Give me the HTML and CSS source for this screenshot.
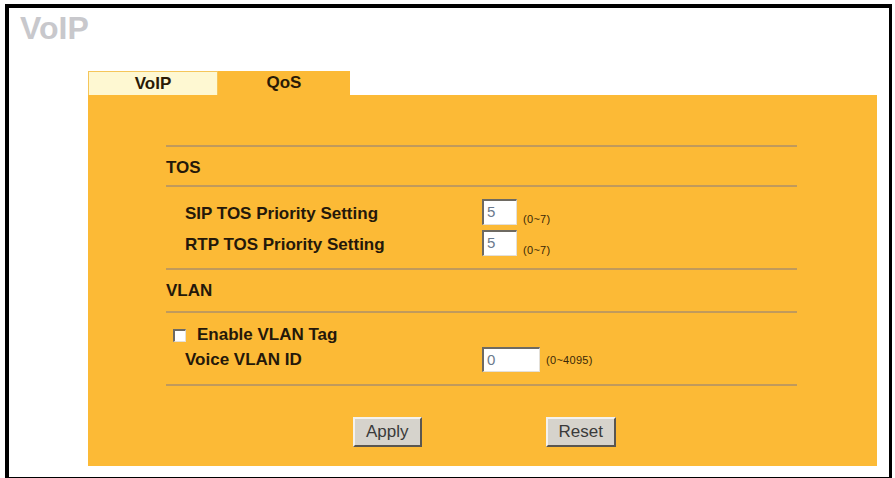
FILE: index.html
```html
<!DOCTYPE html>
<html lang="en">
<head>
  <meta charset="UTF-8">
  <title>VoIP - QoS</title>
  <link rel="stylesheet" href="styles.css">
</head>
<body>
  <div class="frame">
    <h1 class="title">VoIP</h1>

    <div class="panel">
      <div class="tabs">
        <div class="tab tab-off">VoIP</div>
        <div class="tab tab-on">QoS</div>
      </div>

      <div class="panel-body">
        <div class="rule"></div>
        <div class="section">TOS</div>
        <div class="rule"></div>

        <div class="row row-first">
          <span class="label">SIP TOS Priority Setting</span>
          <span class="field small">5</span>
          <span class="range range-low">(0~7)</span>
        </div>
        <div class="row row-next">
          <span class="label">RTP TOS Priority Setting</span>
          <span class="field small">5</span>
          <span class="range range-low">(0~7)</span>
        </div>

        <div class="rule rule-gap"></div>
        <div class="section section-tall">VLAN</div>
        <div class="rule"></div>

        <div class="check-row">
          <span class="checkbox"></span>
          <span class="check-label">Enable VLAN Tag</span>
        </div>
        <div class="row row-vlan">
          <span class="label">Voice VLAN ID</span>
          <span class="field wide">0</span>
          <span class="range">(0~4095)</span>
        </div>

        <div class="rule rule-gap"></div>

        <div class="buttons">
          <span class="button">Apply</span>
          <span class="button">Reset</span>
        </div>
      </div>
    </div>
  </div>
</body>
</html>
```

FILE: styles.css
```css
html, body {
  margin: 0;
  padding: 0;
  background: #fff;
  font-family: "Liberation Sans", Arial, sans-serif;
  overflow: hidden;
}

.frame {
  margin: 4px 0 0 5px;
  width: 880px;
  height: 469px;
  border: 4px solid #000;
  border-right-width: 3px;
}

.title {
  margin: 0;
  padding: 4px 0 0 11px;
  font-size: 32px;
  line-height: 32px;
  font-weight: bold;
  color: #c8c8cc;
}

.panel {
  margin: 27px 0 0 79px;
  width: 789px;
}

.tabs {
  display: flex;
  height: 24px;
}

.tab {
  display: flex;
  align-items: center;
  justify-content: center;
  font-size: 17px;
  font-weight: bold;
  color: #2a1a06;
}

.tab-off {
  width: 128px;
  background: #fef8d2;
  border: 1px solid #f5c65a;
  border-bottom: none;
}

.tab-on {
  width: 132px;
  background: #fcba36;
}

.panel-body {
  background: #fcba36;
  padding: 50px 80px 19px 78px;
  color: #24180a;
}

.rule {
  height: 0;
  border-top: 2px solid #c09a5c;
}

.rule-gap {
  margin-top: 12px;
}

.section {
  height: 38px;
  padding-top: 3px;
  box-sizing: border-box;
  display: flex;
  align-items: center;
  font-size: 17px;
  font-weight: bold;
}

.section-tall {
  height: 41px;
  padding-top: 1px;
}

.row {
  display: flex;
  align-items: center;
}

.row-first {
  margin-top: 12px;
  height: 26px;
}

.row-next {
  margin-top: 5px;
  height: 26px;
}

.row-vlan {
  margin-top: 2px;
  height: 25px;
}

.label {
  width: 297px;
  padding-left: 19px;
  font-size: 17px;
  font-weight: bold;
  padding-top: 4px;
}

.row-vlan .label {
  padding-top: 0;
}

.field {
  box-sizing: border-box;
  height: 100%;
  background: #fff;
  border-top: 2px solid #6e6a62;
  border-left: 2px solid #6e6a62;
  border-right: 1px solid #e4e0d8;
  border-bottom: 1px solid #e4e0d8;
  padding: 2px 0 0 3px;
  font-size: 15px;
  color: #6b7a8c;
}

.small {
  width: 35px;
}

.wide {
  width: 58px;
}

.range {
  margin-left: 6px;
  font-size: 11px;
  letter-spacing: 0.3px;
  color: #3a2808;
}

.range-low {
  margin-top: 14px;
}

.check-row {
  margin-top: 12px;
  height: 20px;
  display: flex;
  align-items: center;
  padding-left: 7px;
}

.checkbox {
  box-sizing: border-box;
  width: 13px;
  height: 13px;
  background: #fff;
  border-top: 2px solid #6e6a62;
  border-left: 2px solid #6e6a62;
  border-right: 1px solid #e4e0d8;
  border-bottom: 1px solid #e4e0d8;
}

.check-label {
  margin-left: 11px;
  font-size: 17px;
  font-weight: bold;
}

.buttons {
  display: flex;
  margin: 31px 0 0 187px;
  gap: 124px;
}

.button {
  box-sizing: border-box;
  height: 30px;
  padding: 0 11px;
  display: flex;
  align-items: center;
  background: #d6d3cc;
  border-top: 2px solid #f4f2ee;
  border-left: 2px solid #f4f2ee;
  border-right: 2px solid #5a5650;
  border-bottom: 2px solid #5a5650;
  font-size: 17px;
  color: #3a3a3a;
}
```
